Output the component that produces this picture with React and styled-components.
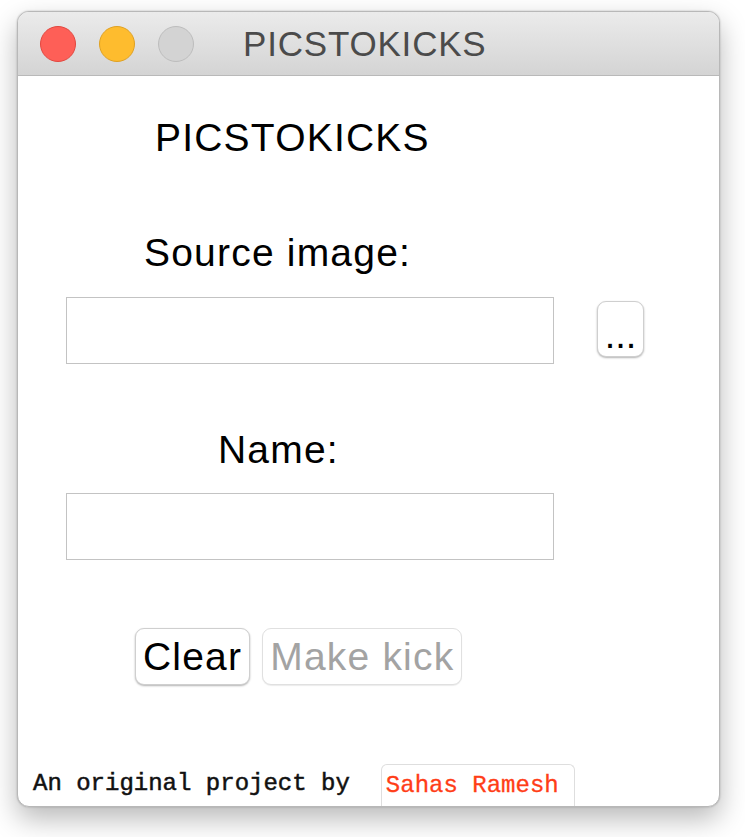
import React from "react";
import styled, { createGlobalStyle } from "styled-components";

const Global = createGlobalStyle`
  html, body { margin: 0; padding: 0; background: #ffffff; }
  body { font-family: "Liberation Sans", Arial, sans-serif; }
  * { box-sizing: border-box; }
`;

const Page = styled.div`
  width: 745px;
  height: 837px;
  padding: 11px 0 0 17px;
`;

const Window = styled.div`
  position: relative;
  width: 703px;
  height: 796px;
  border-radius: 12px;
  overflow: hidden;
  background: #ffffff;
  border: 1px solid #b8b8b8;
  box-shadow: 0 12px 28px rgba(0, 0, 0, 0.28), 0 0 2px rgba(0, 0, 0, 0.25);
  display: flex;
  flex-direction: column;
`;

const TitleBar = styled.div`
  height: 64px;
  flex: none;
  display: flex;
  align-items: center;
  padding-left: 22px;
  background: linear-gradient(#ebebeb, #d4d4d4);
  border-bottom: 1px solid #b9b9b9;
`;

const Light = styled.span`
  width: 36px;
  height: 36px;
  border-radius: 50%;
  margin-right: 23px;
  background: ${(p) => p.$fill};
  border: 1px solid ${(p) => p.$edge};
`;

const WindowTitle = styled.div`
  margin-left: 26px;
  font-family: "Liberation Sans", Arial, sans-serif;
  font-size: 35px;
  letter-spacing: 0.8px;
  color: #4b4b4b;
  line-height: 1;
`;

const Content = styled.div`
  flex: 1;
  display: flex;
  flex-direction: column;
`;

const Label = styled.div`
  margin: ${(p) => p.$top}px 0 0 ${(p) => p.$left}px;
  font-family: "Liberation Sans", Arial, sans-serif;
  font-size: 39px;
  letter-spacing: 1.2px;
  line-height: 42px;
  height: 42px;
  color: #000;
  white-space: nowrap;
`;

const FieldRow = styled.div`
  margin: ${(p) => p.$top}px 0 0 48px;
  display: flex;
  align-items: flex-start;
  gap: 43px;
`;

const TextBox = styled.div`
  width: 488px;
  height: 67px;
  border: 1px solid #c3c3c3;
  background: #fff;
`;

const Button = styled.button`
  height: 57px;
  padding: 0 7px;
  font-family: "Liberation Sans", Arial, sans-serif;
  font-size: 39px;
  letter-spacing: 1.2px;
  line-height: 42px;
  color: ${(p) => (p.disabled ? "#a3a3a3" : "#000")};
  background: #fff;
  border: 1px solid ${(p) => (p.disabled ? "#e0e0e0" : "#cfcfcf")};
  border-radius: 9px;
  box-shadow: ${(p) =>
    p.disabled ? "0 1px 1px rgba(0,0,0,0.08)" : "0 1px 2px rgba(0,0,0,0.3)"};
  display: flex;
  align-items: center;
  justify-content: center;
  white-space: nowrap;
  cursor: default;
`;

const BrowseButton = styled(Button)`
  width: 47px;
  height: 56px;
  margin-top: 4px;
  padding: 0;
  letter-spacing: 0;
  font-size: 38px;
  align-items: flex-end;
`;

const ButtonRow = styled.div`
  margin: 68px 0 0 117px;
  display: flex;
  gap: 12px;
`;

const Footer = styled.div`
  margin-top: auto;
  display: flex;
  align-items: flex-end;
  padding-left: 15px;
`;

const Credit = styled.span`
  font-family: "Liberation Mono", "Courier New", monospace;
  font-size: 24px;
  color: #111;
  -webkit-text-stroke: 0.5px #111;
  line-height: 28px;
  padding-bottom: 8px;
  white-space: pre;
`;

const AuthorTag = styled.div`
  margin-left: 31px;
  height: 42px;
  padding: 7px 15px 0 4px;
  border: 1px solid #dedede;
  border-bottom: none;
  border-radius: 6px 6px 0 0;
  font-family: "Liberation Mono", "Courier New", monospace;
  font-size: 24px;
  line-height: 28px;
  color: #ff3d17;
  -webkit-text-stroke: 0.3px #ff3d17;
  white-space: nowrap;
`;

export default function App() {
  return (
    <>
      <Global />
      <Page>
        <Window>
          <TitleBar>
            <Light $fill="#fe5f57" $edge="#e2473f" />
            <Light $fill="#febc2e" $edge="#dfa123" />
            <Light $fill="#d3d3d3" $edge="#bdbdbd" />
            <WindowTitle>PICSTOKICKS</WindowTitle>
          </TitleBar>
          <Content>
            <Label $top={41} $left={137}>PICSTOKICKS</Label>
            <Label $top={73} $left={126}>Source image:</Label>
            <FieldRow $top={23}>
              <TextBox />
              <BrowseButton>...</BrowseButton>
            </FieldRow>
            <Label $top={65} $left={200}>Name:</Label>
            <FieldRow $top={22}>
              <TextBox />
            </FieldRow>
            <ButtonRow>
              <Button>Clear</Button>
              <Button disabled>Make kick</Button>
            </ButtonRow>
            <Footer>
              <Credit>An original project by</Credit>
              <AuthorTag>Sahas Ramesh</AuthorTag>
            </Footer>
          </Content>
        </Window>
      </Page>
    </>
  );
}
